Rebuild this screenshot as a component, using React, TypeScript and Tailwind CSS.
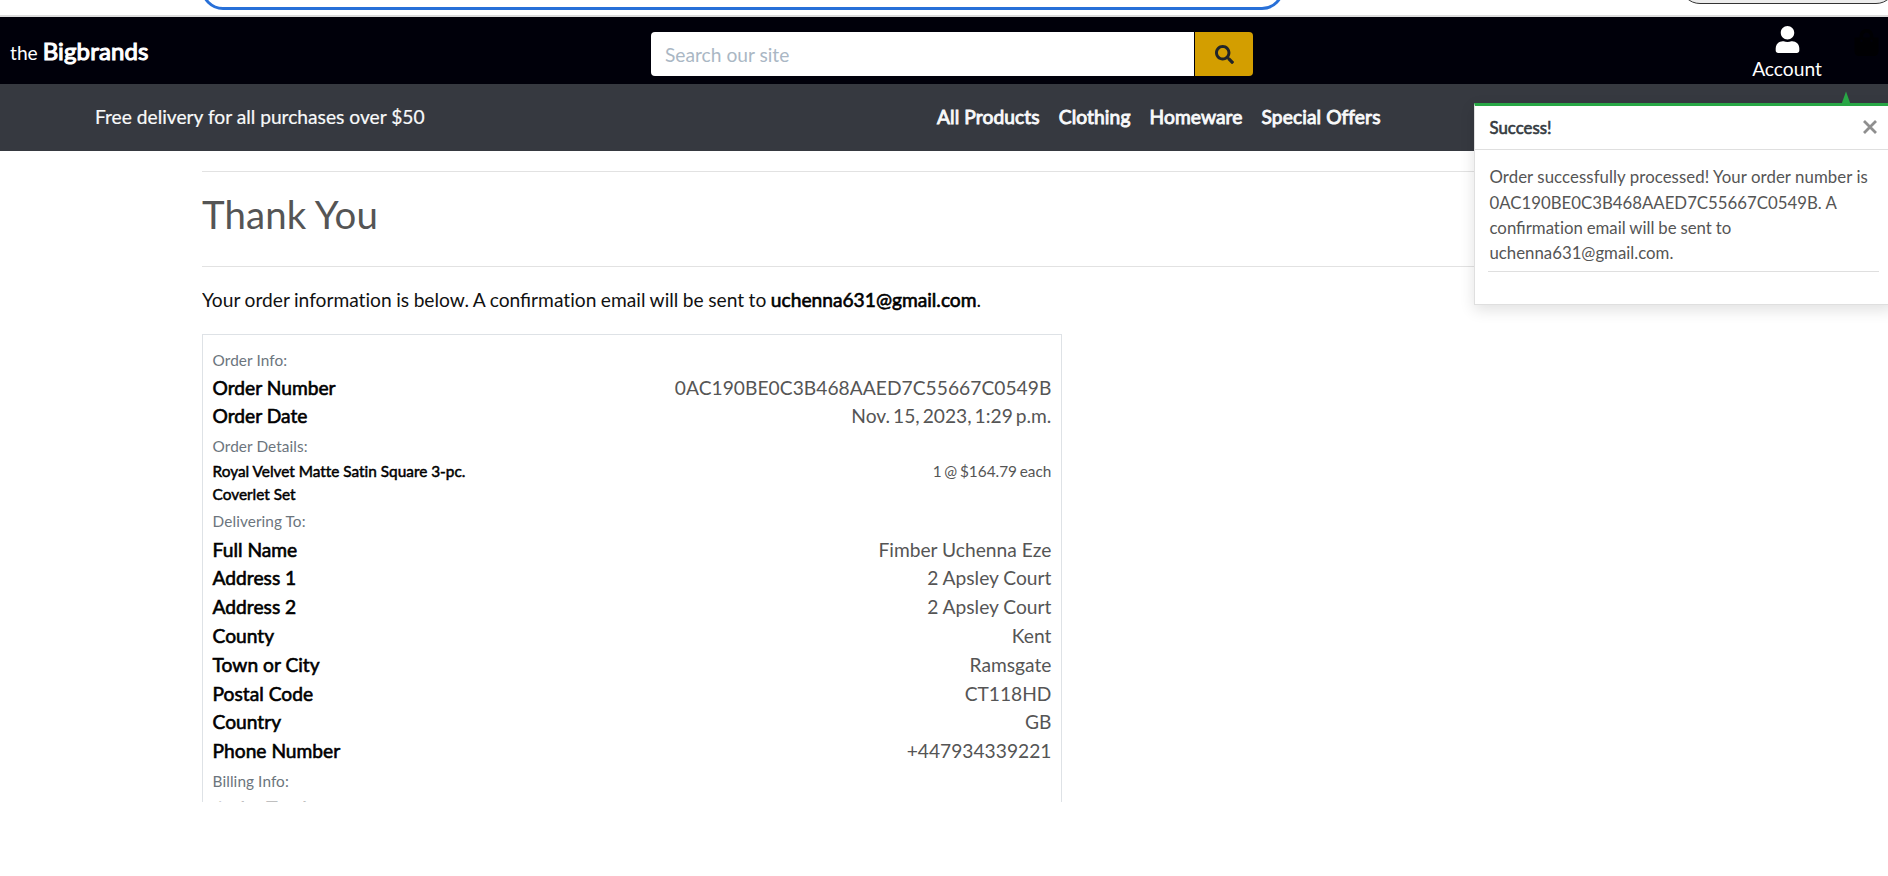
import React from "react";
import { FaSearch, FaShoppingBag, FaUser } from "react-icons/fa";

const STRONG = "[-webkit-text-stroke:0.6px_currentColor]";

function Heading({ children }: { children: React.ReactNode }) {
  return (
    <p className="h-[29.1px] text-[#6c757d]">
      <small className="text-[15.36px] tracking-[0.08px]">{children}</small>
    </p>
  );
}

function Row({ label, value }: { label: string; value: React.ReactNode }) {
  return (
    <div className="flex justify-between">
      <span className={`text-black ${STRONG}`}>{label}</span>
      <span>{value}</span>
    </div>
  );
}

function Confirmation() {
  return (
    <>
      <span className="[font-variant-ligatures:normal]">confirm</span>ation
    </>
  );
}

const delivery = [
  ["Full Name", "Fimber Uchenna Eze"],
  ["Address 1", "2 Apsley Court"],
  ["Address 2", "2 Apsley Court"],
  ["County", "Kent"],
  ["Town or City", "Ramsgate"],
  ["Postal Code", "CT118HD"],
  ["Country", "GB"],
  ["Phone Number", "+447934339221"],
];

function BrowserEdge() {
  return (
    <div className="relative h-[17px] overflow-hidden border-b-2 border-[#dcdcdc] bg-white">
      <div className="absolute bottom-[5px] left-[201px] h-[44px] w-[1083px] rounded-[22px] border-[3px] border-[#2870d8]" />
      <div className="absolute bottom-[11px] left-[1680px] h-[40px] w-[216px] rounded-[20px] border border-[#333] bg-[#ececec]" />
    </div>
  );
}

function Toast() {
  return (
    <div className="absolute left-[1474px] top-[103px] h-[202px] w-[420px] border border-t-[3px] border-[#dfdfdf] border-t-[#28a745] bg-white shadow-[0_5px_14px_rgba(0,0,0,0.12)]">
      <svg className="absolute -top-[15px] left-[366px] h-[13px] w-[10px]" viewBox="0 0 10 13">
        <path d="M5 0.5 9.5 13H0.5Z" fill="#28a745" />
      </svg>
      <div className="flex h-[44px] items-center justify-between border-b border-[#dfdfdf] pl-[14.5px] pr-[16px] text-[16.8px] text-[#343a40]">
        <span className={`pt-px ${STRONG}`}>Success!</span>
        <svg className="mb-[2px] size-[14px]" viewBox="0 0 14 14">
          <path d="M1 1 13 13M13 1 1 13" stroke="#8f8f8f" strokeWidth="2.8" />
        </svg>
      </div>
      <div className="ml-[13px] mt-[14.4px] w-[391px] border-b border-[#dfdfdf] pb-[5.4px] pl-[1.5px] text-[16.8px] leading-[25.2px] text-[#555]">
        <span className="tracking-[0.08px]">Order successfully processed! Your order number is</span>
        <br />
        0AC190BE0C3B468AAED7C55667C0549B. A
        <br />
        <span className="[word-spacing:-0.4px]">
          <Confirmation /> email will be sent to
        </span>
        <br />
        uchenna631@gmail.com.
      </div>
    </div>
  );
}

export default function App() {
  return (
    <div className="relative h-[876px] w-[1888px] overflow-hidden bg-white font-[Lato,sans-serif] text-[19.2px] leading-[28.8px] text-[#555] [font-variant-ligatures:none]">
      <BrowserEdge />
      <header className="flex h-[67px] bg-[#00000a] text-white">
        <div className="w-[651px] pl-[10px] pt-[20px]">
          <span>the </span>
          <span className="text-[24px] tracking-[0.15px] [-webkit-text-stroke:1.1px_currentColor]">Bigbrands</span>
        </div>
        <div className="mt-[15px] flex h-[44px] w-[602px]">
          <div className="mr-px flex w-[543px] items-center rounded-l-[4px] bg-white pl-[14px] pt-[2px] text-[#aab7c4]">
            Search our site
          </div>
          <div className="flex w-[58px] items-center justify-center rounded-r-[4px] bg-[#d39e00] text-[#212529]">
            <FaSearch className="size-[19px]" />
          </div>
        </div>
        <div className="ml-[494px] flex w-[80px] flex-col items-center pt-[9px]">
          <FaUser className="size-[27px]" />
          <span className="mt-[2px]">Account</span>
        </div>
        <FaShoppingBag className="ml-[26px] mt-[12px] size-[27px] text-[#000003]" />
      </header>
      <nav className="flex h-[67px] items-center bg-[#363940] text-[#f8f9fa]">
        <p className="w-[937px] pl-[95px] [-webkit-text-stroke:0.2px_currentColor]">
          Free delivery for all purchases over $50
        </p>
        <div className="flex gap-[19px] tracking-[0.1px] [-webkit-text-stroke:0.9px_currentColor]">
          <span>All Products</span>
          <span>Clothing</span>
          <span>Homeware</span>
          <span>Special Offers</span>
        </div>
      </nav>
      <main className="ml-[202px] mr-[202px] h-[651px] overflow-hidden pt-[20px]">
        <div className="h-[96px] border-y border-[#e2e2e2] pt-[19px]">
          <h1 className="text-[38.4px] leading-[46px] tracking-[0.1px]">Thank You</h1>
        </div>
        <p className="mt-[19px] text-[#111] [word-spacing:-0.4px]">
          Your order information is below. A <Confirmation /> email will be sent to{" "}
          <span className={`text-black ${STRONG}`}>uchenna631@gmail.com</span>.
        </p>
        <section className="mt-[19.2px] w-[860px] border border-[#dee2e6] px-[9.6px] pt-[9.6px]">
          <Heading>Order Info:</Heading>
          <Row
            label="Order Number"
            value={<span className="tracking-[0.04px]">0AC190BE0C3B468AAED7C55667C0549B</span>}
          />
          <Row
            label="Order Date"
            value={<span className="[word-spacing:-1.9px]">Nov. 15, 2023, 1:29 p.m.</span>}
          />
          <Heading>Order Details:</Heading>
          <div className="flex justify-between text-[15.36px] leading-[23.04px]">
            <span className="w-[270px] text-black [-webkit-text-stroke:0.5px_currentColor]">
              Royal Velvet Matte Satin Square 3-pc. Coverlet Set
            </span>
            <span className="[word-spacing:-1.2px]">1 @ $164.79 each</span>
          </div>
          <Heading>Delivering To:</Heading>
          {delivery.map(([label, value]) => (
            <Row key={label} label={label} value={value} />
          ))}
          <Heading>Billing Info:</Heading>
          <Row label="Order Total" value="" />
        </section>
      </main>
      <Toast />
    </div>
  );
}
